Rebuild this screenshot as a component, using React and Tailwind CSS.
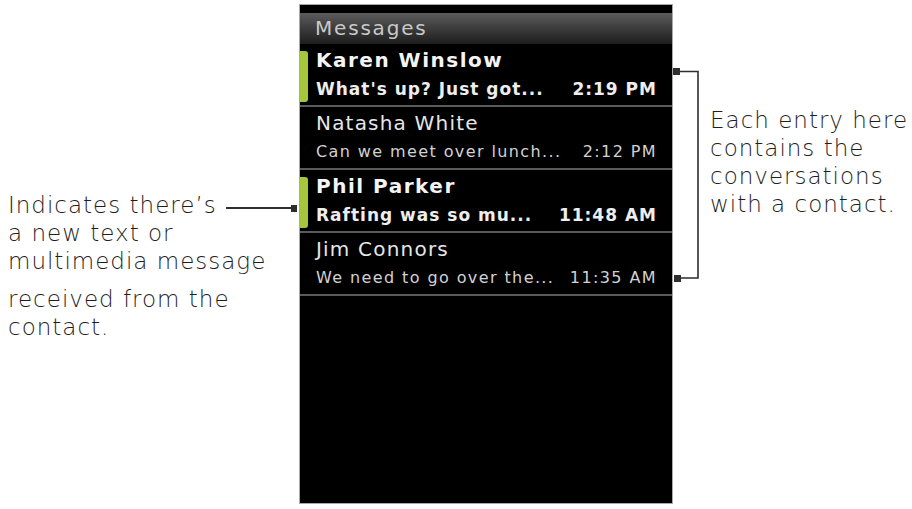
const threads = [
  { name: 'Karen Winslow', preview: "What's up? Just got...", time: '2:19 PM', unread: true },
  { name: 'Natasha White', preview: 'Can we meet over lunch...', time: '2:12 PM', unread: false },
  { name: 'Phil Parker', preview: 'Rafting was so mu...', time: '11:48 AM', unread: true },
  { name: 'Jim Connors', preview: 'We need to go over the...', time: '11:35 AM', unread: false }
];

function ThreadRow({ name, preview, time, unread }) {
  return (
    <div className="flex h-[63px] border-b-2 border-[#5a5a5a]">
      {/* unread marker */}
      <div className="w-[8px] shrink-0 pt-[7px] pb-[3px]">
        {unread && <div className="h-full rounded-r-[3px] bg-[#a6c73c]" />}
      </div>

      <div className="flex-1 pl-[8px] pr-[15px] pt-[4px]">
        {unread ? (
          <>
            <div className="text-[20px] leading-[24px] font-bold tracking-[1.5px] text-[#f4f4f4]">
              {name}
            </div>
            <div className="mt-[7px] flex justify-between text-[17px] leading-[20px] font-bold tracking-[1px] text-[#eeeeee]">
              <span>{preview}</span>
              <span>{time}</span>
            </div>
          </>
        ) : (
          <>
            <div className="text-[20px] leading-[24px] tracking-[1.2px] text-[#e6e6e6]">
              {name}
            </div>
            <div className="mt-[7px] flex justify-between text-[16px] leading-[20px] tracking-[1.4px] text-[#d2d2d2]">
              <span>{preview}</span>
              <span>{time}</span>
            </div>
          </>
        )}
      </div>
    </div>
  );
}

export default function App() {
  return (
    <div className="flex h-[509px] w-[912px] overflow-hidden bg-white font-['DejaVu_Sans',sans-serif] font-extralight text-[23px] leading-[28px] tracking-[1px] text-[#1e1e1e]">
      {/* Left callout */}
      <div className="w-[299px] shrink-0 pl-[8px] pt-[191px]">
        <div className="flex items-center">
          <span>Indicates there’s</span>
          <div className="ml-[9px] mr-[2px] mt-[6px] flex flex-1 items-center">
            <div className="h-[2px] flex-1 bg-[#2e2e2e]" />
            <div className="h-[7px] w-[6px] bg-[#2e2e2e]" />
          </div>
        </div>
        <div>a new text or</div>
        <div>multimedia message</div>
        <div className="mt-[10px]">received from the</div>
        <div>contact.</div>
      </div>

      {/* Phone screen */}
      <div className="mt-[4px] h-[500px] w-[374px] shrink-0 border border-[#a8a8a8] bg-black font-normal tracking-normal">
        <div className="h-[8px]" />
        <div className="h-[31px] bg-gradient-to-b from-[#5c5c5c] to-[#1e1e1e] pl-[15px] text-[20px] leading-[30px] tracking-[1.8px] text-[#c9c9c9]">
          Messages
        </div>
        {threads.map((t) => (
          <ThreadRow key={t.name} {...t} />
        ))}
      </div>

      {/* Right callout */}
      <svg className="mt-[64px] shrink-0" width="30" height="222" viewBox="0 0 30 222">
        <rect x="0" y="4" width="7" height="7" fill="#2e2e2e" />
        <path d="M7 7.5H25V214H6" fill="none" stroke="#2e2e2e" strokeWidth="1.6" />
        <rect x="1" y="211" width="7" height="7" fill="#2e2e2e" />
      </svg>
      <div className="ml-[7px] pt-[106px]">
        <div>Each entry here</div>
        <div>contains the</div>
        <div>conversations</div>
        <div>with a contact.</div>
      </div>
    </div>
  );
}
